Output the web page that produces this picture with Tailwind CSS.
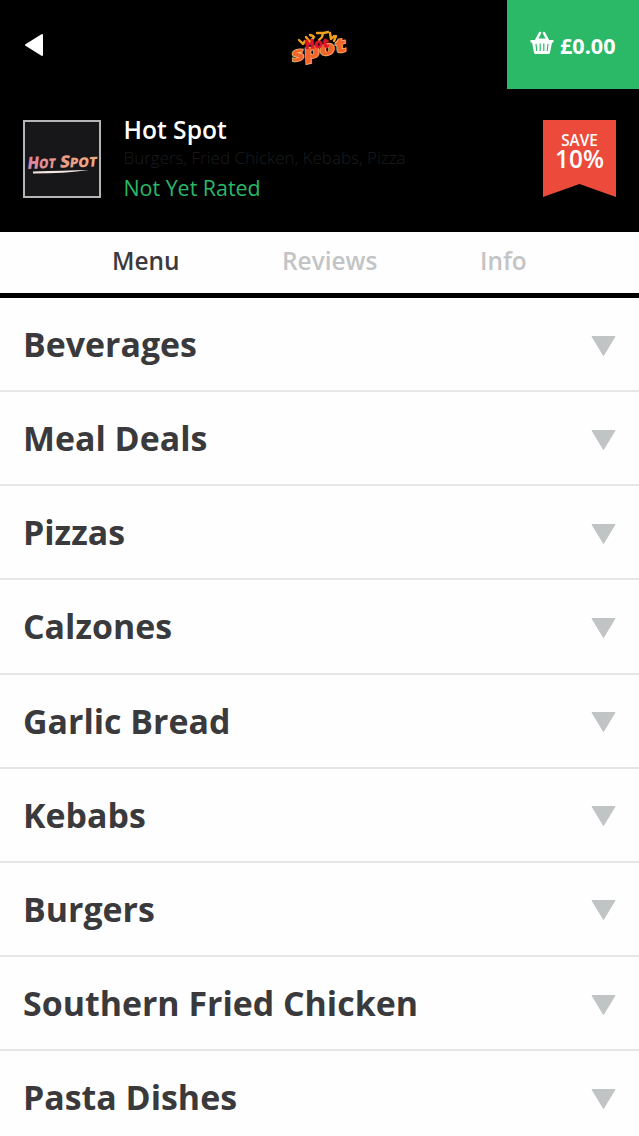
<!DOCTYPE html>
<html lang="en">
<head>
    <meta charset="UTF-8">
    <meta name="viewport" content="width=device-width, initial-scale=1.0">
    <title>Hot Spot Menu</title>
    <script src="https://cdn.jsdelivr.net/npm/@tailwindcss/browser@4"></script>
</head>
<body class="bg-black font-['Open_Sans',sans-serif] overflow-hidden h-[1136px]">
    <!-- Top bar -->
    <header class="grid grid-cols-[132px_1fr_132px] h-[89px] bg-black">
        <a href="#" aria-label="Back" class="flex items-center pl-6">
            <svg class="w-5 h-6" viewBox="0 0 20 24" fill="#fff" stroke="#fff" stroke-width="2" stroke-linejoin="round"><path d="M2 12 18 2v20z"/></svg>
        </a>
        <div class="flex justify-center pt-[26px]">
            <svg class="w-[64px] h-[42px]" viewBox="0 0 64 42">
                <!-- flames -->
                <g fill="none" stroke="#f0a01c" stroke-width="2.400" stroke-linecap="round" stroke-linejoin="round">
                    <path d="m11 14 4 4 2-3M18 11l4 5 4-5M22 9l3 1M29 7h6l-1 4-3 3M36 7l4-1M42 7l1 6 3-3M48 10l-2 5M51 14l-3 3"/>
                </g>
                <text transform="translate(4 36) rotate(-11) skewX(-8) scale(1.150 .95)" font-family="Open Sans, sans-serif" font-weight="800" font-size="21" textLength="48" lengthAdjust="spacingAndGlyphs" fill="#f2642a" stroke="#f6b878" stroke-width="1.500" paint-order="stroke">spot</text>
                <text transform="translate(17 23) rotate(-5)" font-family="Open Sans, sans-serif" font-weight="800" font-size="12.500" textLength="24" lengthAdjust="spacingAndGlyphs" fill="#dc142c" stroke="#dc142c" stroke-width=".6">Hot</text>
            </svg>
        </div>
        <a href="#" class="flex items-center bg-[#2bb867] pl-[23px] pt-[3px] text-white">
            <svg class="w-6 h-6 -mt-1.5 shrink-0" viewBox="0 0 24 24" fill="none" stroke="#fff">
                <path d="M6 9.500 10 2M18 9.500 14 2" stroke-width="2.600" stroke-linecap="round"/>
                <path d="M.5 9H5q1 0 2-.8T9 7.500h6q1 0 2 .7T19 9h4.500v2.500H22l-2 10Q19.700 23 18.500 23h-13Q4.300 23 4 21.500l-2-10H.5z" fill="#fff" stroke="none"/>
                <path d="m6 13 .8 7M10.200 12.500V20M13.800 12.500V20M18 13l-.8 7" stroke="#2bb867" stroke-width="1.200"/>
            </svg>
            <span class="ml-[6px] mt-px text-[21.6px] font-bold whitespace-nowrap">£0.00</span>
        </a>
    </header>

    <!-- Restaurant details -->
    <section class="flex h-[143px] pt-[31px] px-[23px]">
        <div class="w-[78px] h-[78px] shrink-0 border-2 border-[#b5b5b7] bg-[#171719]">
            <svg class="w-full h-full" viewBox="0 0 74 74">
                <defs>
                    <linearGradient id="title" gradientUnits="userSpaceOnUse" x1="0" x2="70">
                        <stop offset="0" stop-color="#dc84a4"/>
                        <stop offset=".5" stop-color="#e89a87"/>
                        <stop offset="1" stop-color="#f0ad80"/>
                    </linearGradient>
                </defs>
                <g transform="translate(2 47) rotate(-2) skewX(-9)" font-family="Open Sans, sans-serif" font-weight="800" fill="url(#title)">
                    <text transform="scale(.88 1)" font-size="17">H<tspan font-size="13.500">OT</tspan></text>
                    <text x="32.500" font-size="17">S<tspan font-size="13.500">POT</tspan></text>
                </g>
                <path d="M8 49.500Q38 48.500 64 48 40 51.500 8 51.500z" fill="#f3e5df"/>
            </svg>
        </div>
        <div class="ml-[22.500px] flex-1 whitespace-nowrap">
            <h1 class="h-[26px] -mt-[3px] text-[24.6px] leading-[26px] font-semibold text-white">Hot Spot</h1>
            <p class="h-[26px] mt-[1px] text-[17px] leading-[28px] font-light text-[#1b1d1e]">Burgers, Fried Chicken, Kebabs, Pizza</p>
            <p class="mt-[4px] text-[21.4px] leading-[28px] text-[#2bb867]">Not Yet Rated</p>
        </div>
        <div class="w-[73px] h-[77px] bg-[#ec4b3c] [clip-path:polygon(0_0,100%_0,100%_100%,50%_83%,0_100%)] text-center text-white">
            <p class="pt-[11px] text-[15.3px] leading-[18px] font-semibold">SAVE</p>
            <p class="text-[24.3px] leading-[20px] font-semibold">10%</p>
        </div>
    </section>

    <!-- Tabs -->
    <nav class="flex h-[61px] pl-[112px] bg-[#fefefe] text-[24.4px] leading-[58px] font-semibold text-[#c3c4c6]">
        <a href="#" class="w-[170px] text-[#3b3a3d]">Menu</a>
        <a href="#" class="w-[198px]">Reviews</a>
        <a href="#">Info</a>
    </nav>

    <!-- Categories -->
    <main id="categories" class="mt-[5px] bg-[#fefefe]"></main>

    <template id="category">
        <div class="flex items-center justify-between h-[94.15px] pl-[23px] pr-[23px] border-b-2 border-[#e6e6e8]">
            <h2 class="text-[33.9px] leading-[46px] font-bold text-[#3a393c]"></h2>
            <svg class="w-[25px] h-[22px] mt-[3px]" viewBox="0 0 25 22" fill="#c0c4c5" stroke="#c0c4c5" stroke-width="1" stroke-linejoin="round"><path d="M1 1.500h23l-11.500 19z"/></svg>
        </div>
    </template>
    <script>
        const names = ['Beverages', 'Meal Deals', 'Pizzas', 'Calzones', 'Garlic Bread', 'Kebabs', 'Burgers', 'Southern Fried Chicken', 'Pasta Dishes'];
        const list = document.getElementById('categories');
        names.forEach(function(name) {
            const row = document.getElementById('category').content.cloneNode(true);
            row.querySelector('h2').textContent = name;
            list.appendChild(row);
        });
    </script>
</body>
</html>
